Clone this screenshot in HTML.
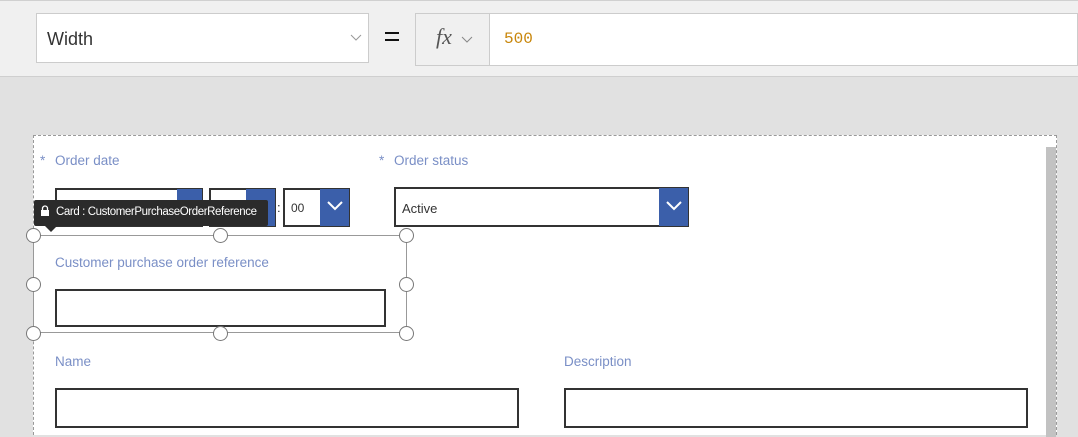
<!DOCTYPE html>
<html><head><style>
*{box-sizing:border-box;margin:0;padding:0}
body{width:1078px;height:433px;overflow:hidden;background:#e1e1e1;font-family:"Liberation Sans","DejaVu Sans",sans-serif;position:relative}
.a{position:absolute}
.lbl{color:#7a8fc6;font-size:13.5px}
.inp{background:#fff;border:2px solid #333}
.blue{background:#3b5faa}
.h{position:absolute;width:15px;height:15px;border-radius:50%;background:#fff;border:1px solid #777}
</style></head><body>
<div class="a" style="left:0;top:0;width:1078px;height:77px;background:#f0f0f0;border-top:1px solid #d0d0d0;border-bottom:1px solid #cfcfcf"></div>
<div class="a" style="left:36px;top:13px;width:333px;height:50px;background:#fff;border:1px solid #ccc"></div>
<div class="a" style="left:47px;top:29px;font-size:18px;color:#333">Width</div>
<svg class="a" style="left:350px;top:34px" width="12" height="8"><path d="M1 1L6 6L11 1" fill="none" stroke="#999" stroke-width="1"/></svg>
<div class="a" style="left:385px;top:32px;width:14px;height:2px;background:#111"></div>
<div class="a" style="left:385px;top:39px;width:14px;height:2px;background:#111"></div>
<div class="a" style="left:415px;top:13px;width:663px;height:53px;background:#fff;border:1px solid #ccc"></div>
<div class="a" style="left:416px;top:14px;width:74px;height:51px;background:#f0f0f0;border-right:1px solid #ccc"></div>
<div class="a" style="left:436px;top:24px;font-size:22px;font-style:italic;font-family:'Liberation Serif',serif;color:#555">fx</div>
<svg class="a" style="left:461px;top:36px" width="12" height="8"><path d="M1 1L6 6L11 1" fill="none" stroke="#888" stroke-width="1"/></svg>
<div class="a" style="left:504px;top:30px;font-size:16px;font-family:'Liberation Mono',monospace;color:#c8860a">500</div>

<div class="a" style="left:33px;top:135px;width:1024px;height:300px;background:#fff;border:1px dashed #999;border-bottom:none"></div>
<div class="a" style="left:1046px;top:147px;width:10px;height:290px;background:#c2c2c2"></div>

<div class="a lbl" style="left:40px;top:153px">*</div><div class="a lbl" style="left:55px;top:153px">Order date</div>
<div class="a lbl" style="left:379px;top:153px">*</div><div class="a lbl" style="left:394px;top:153px">Order status</div>

<div class="a inp" style="left:55px;top:188px;width:148px;height:39px"></div>
<div class="a blue" style="left:177px;top:189px;width:25px;height:37px"></div>
<div class="a inp" style="left:209px;top:188px;width:67px;height:39px"></div>
<div class="a blue" style="left:246px;top:189px;width:29px;height:37px"></div>
<div class="a" style="left:277px;top:200px;font-size:13px;color:#333">:</div>
<div class="a inp" style="left:283px;top:188px;width:67px;height:39px"></div>
<div class="a" style="left:291px;top:201px;font-size:12px;color:#333">00</div>
<div class="a blue" style="left:320px;top:189px;width:29px;height:37px"></div>
<svg class="a" style="left:326px;top:200px" width="18" height="12"><path d="M2 2L9 9L16 2" fill="none" stroke="#fff" stroke-width="2"/></svg>

<div class="a inp" style="left:394px;top:187px;width:295px;height:40px"></div>
<div class="a" style="left:402px;top:201px;font-size:13px;color:#333">Active</div>
<div class="a blue" style="left:659px;top:188px;width:29px;height:38px"></div>
<svg class="a" style="left:665px;top:200px" width="18" height="12"><path d="M2 2L9 9L16 2" fill="none" stroke="#fff" stroke-width="2"/></svg>

<div class="a" style="left:34px;top:200px;width:234px;height:26px;background:#2b2b2b;border-radius:2px"></div>
<div class="a" style="left:45px;top:226px;width:0;height:0;border-left:6px solid transparent;border-right:6px solid transparent;border-top:6px solid #2b2b2b"></div>
<svg class="a" style="left:40px;top:205px" width="10" height="12"><rect x="1" y="5" width="8" height="6" fill="#fff"/><path d="M2.5 5V3.5a2.5 2.5 0 0 1 5 0V5" fill="none" stroke="#fff" stroke-width="1.3"/></svg>
<div class="a" style="left:56px;top:206px;font-size:11.5px;color:#fff;letter-spacing:-0.4px">Card : CustomerPurchaseOrderReference</div>

<div class="a" style="left:33px;top:235px;width:374px;height:98px;border:1px solid #999"></div>
<div class="a lbl" style="left:55px;top:255px">Customer purchase order reference</div>
<div class="a inp" style="left:55px;top:289px;width:331px;height:38px"></div>
<div class="h" style="left:26px;top:228px"></div>
<div class="h" style="left:213px;top:228px"></div>
<div class="h" style="left:399px;top:228px"></div>
<div class="h" style="left:26px;top:277px"></div>
<div class="h" style="left:399px;top:277px"></div>
<div class="h" style="left:26px;top:326px"></div>
<div class="h" style="left:213px;top:326px"></div>
<div class="h" style="left:399px;top:326px"></div>

<div class="a lbl" style="left:55px;top:354px">Name</div>
<div class="a lbl" style="left:564px;top:354px">Description</div>
<div class="a inp" style="left:55px;top:388px;width:464px;height:40px"></div>
<div class="a inp" style="left:564px;top:388px;width:464px;height:40px"></div>
</body></html>
